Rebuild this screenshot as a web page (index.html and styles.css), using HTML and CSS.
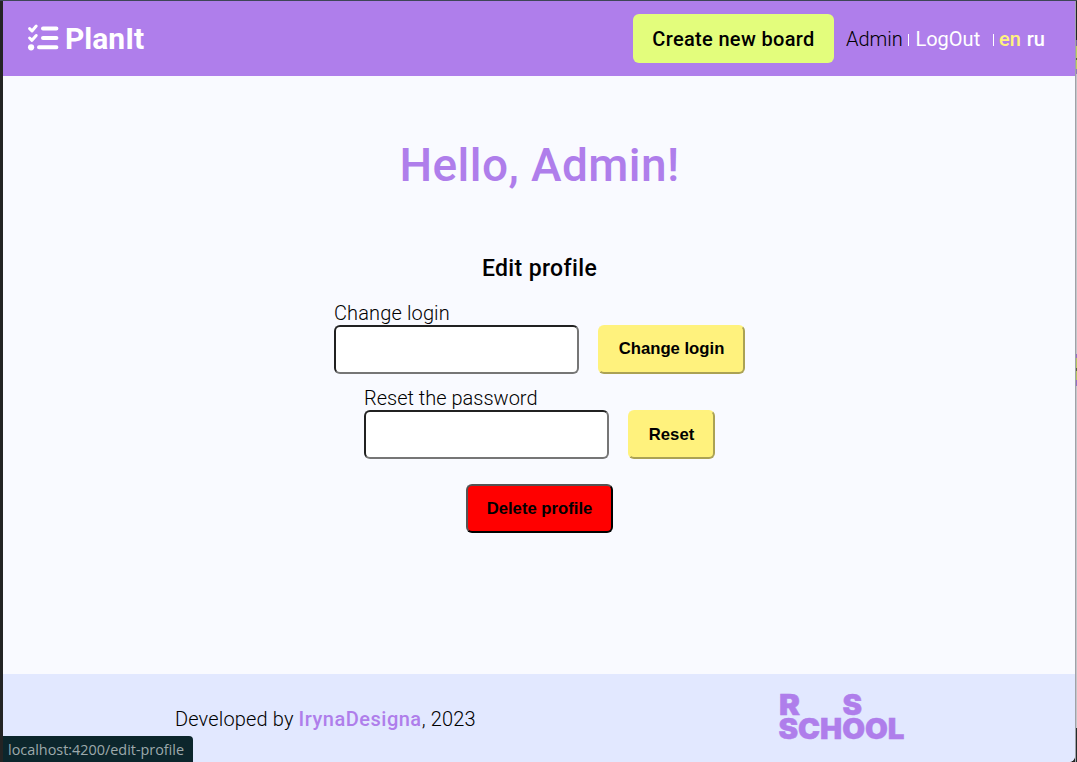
FILE: index.html
```html
<!DOCTYPE html>
<html lang="en">
<head>
<meta charset="utf-8">
<title>PlanIt</title>
<link rel="stylesheet" href="styles.css">
</head>
<body>
<div class="window">
  <div class="app">
    <header class="header">
      <div class="logo">
        <svg class="logo-icon" viewBox="0 0 32 28" width="32" height="28" fill="none" stroke="#fff" stroke-linecap="round" stroke-linejoin="round">
          <path d="M1.6 4.6l2.4 2.3L8.2 2.1M1.6 14l2.4 2.3 4.2-4.8" stroke-width="3"/>
          <path d="M15 4.6H28.4M15 14H28.4M11 23.3H28.4" stroke-width="4"/>
          <circle cx="3.1" cy="23.3" r="3.1" fill="#fff" stroke="none"/>
        </svg>
        <span class="logo-name">PlanIt</span>
      </div>
      <nav class="nav">
        <button class="create">Create new board</button>
        <span class="user">Admin</span>
        <i class="divider"></i>
        <span class="logout">LogOut</span>
        <i class="divider"></i>
        <span class="lang active">en</span>
        <span class="lang">ru</span>
      </nav>
    </header>
    <main class="main">
      <h1 class="hello">Hello, Admin!</h1>
      <h2 class="subtitle">Edit profile</h2>
      <form class="form">
        <div class="row">
          <label class="field">Change login<input class="input" type="text"></label>
          <button class="btn" type="button">Change login</button>
        </div>
        <div class="row">
          <label class="field reset">Reset the password<input class="input" type="text"></label>
          <button class="btn small" type="button">Reset</button>
        </div>
        <button class="btn delete" type="button">Delete profile</button>
      </form>
    </main>
    <footer class="footer">
      <p class="credit">Developed by <b class="author">IrynaDesigna</b>, 2023</p>
      <svg class="school" width="128" height="50" viewBox="0 0 128 50">
        <text x="2" y="22" textLength="21" lengthAdjust="spacingAndGlyphs">R</text>
        <text x="65.5" y="22" textLength="19.5" lengthAdjust="spacingAndGlyphs">S</text>
        <text x="1.5" y="46" textLength="126" lengthAdjust="spacingAndGlyphs">SCHOOL</text>
      </svg>
    </footer>
  </div>
  <div class="edge"></div>
  <div class="status">localhost:4200/edit-profile</div>
</div>
</body>
</html>
```
FILE: styles.css
```css
* { box-sizing: border-box; }
body { margin: 0; background: #242424; font-family: Roboto, "Liberation Sans", sans-serif; font-size: 20px; font-weight: 300; color: #000; }
.window { position: relative; display: flex; width: 1077px; height: 762px; overflow: hidden; padding-left: 3px; border-top: 1px solid #3e4657; }
.app { display: flex; flex-direction: column; width: 1072px; background: #f9faff; border-bottom-right-radius: 6px; overflow: hidden; }
.header { display: flex; justify-content: space-between; align-items: center; height: 75px; padding: 0 30px 0 25px; background: #af7eeb; color: #fff; }
.logo { display: flex; align-items: center; gap: 5px; }
.logo-icon { display: block; margin-bottom: 2px; overflow: visible; }
.logo-name { font-size: 30px; font-weight: 700; line-height: 35px; }
.nav { display: flex; align-items: center; line-height: 24px; }
.create { width: 201px; height: 49px; margin-right: 12px; padding: 0; border: 0; border-radius: 6px; background: #e3fd7c; font: 500 20px Roboto, sans-serif; letter-spacing: .33px; color: #000; }
.user { width: 62px; color: #000; }
.divider { width: 1px; height: 12px; margin-top: 3px; background: #fff; }
.logout { width: 84px; padding-left: 6.5px; font-weight: 400; }
.lang { margin-left: 6px; font-weight: 500; }
.active { margin-left: 5px; color: #fff27d; }
.main { display: flex; flex-direction: column; align-items: center; height: 598px; padding: 61px 0 0 1px; }
.hello { margin: 0; font-size: 46px; font-weight: 500; line-height: 57px; letter-spacing: .42px; color: #af7eeb; }
.subtitle { margin: 61px 0 0; font-size: 23px; font-weight: 500; line-height: 28px; letter-spacing: .35px; }
.form { display: flex; flex-direction: column; align-items: center; margin-top: 19px; }
.row { display: flex; align-items: flex-end; gap: 19px; height: 72px; margin-bottom: 13px; }
.field { display: flex; flex-direction: column; line-height: 23px; letter-spacing: .13px; }
.reset { letter-spacing: 0; }
.input { width: 245px; height: 49px; border: 2px inset #767676; border-radius: 6px; background: #fff; }
.btn { width: 147px; height: 49px; padding: 0 0 1px; border: 2px outset #fff27d; border-radius: 6px; background: #fff27d; font: 700 16.7px "Liberation Sans", Arial, sans-serif; color: #000; }
.small { width: 87px; padding: 0; }
.delete { margin-top: 12px; padding: 0; border-color: #000; background: #f00; }
.footer { display: flex; justify-content: space-between; align-items: center; height: 88px; padding: 0 170px 0 172px; background: #e2e8ff; }
.credit { margin: 2px 0 0; letter-spacing: .15px; }
.author { font-weight: 500; letter-spacing: .5px; color: #af7eeb; }
.school { display: block; overflow: visible; font: 900 28px Inter, sans-serif; fill: #af7eeb; stroke: #af7eeb; stroke-width: .5px; }
.edge { width: 2px; background: linear-gradient(#242424 0 39px, #7e5fa2 39px 45px, #bdcf63 45px 57px, #596236 57px 59px, #bdcf63 59px 68px, #9277b5 68px 73px, #c5c6ca 73px 353px, #9470c4 353px 357px, #b5c662 357px 367px, #59633a 367px 370px, #b5c662 370px 379px, #9470c4 379px 385px, #c5c6ca 385px 727px, #242b2b 727px); border-left: 1px solid #a0a2a8; }
.status { position: absolute; left: 3px; bottom: 0; width: 190px; height: 26px; padding-left: 5px; border-top-right-radius: 4px; background: #0c262c; font: 400 14.4px/27px "Open Sans", sans-serif; color: #9da9ab; }
```
